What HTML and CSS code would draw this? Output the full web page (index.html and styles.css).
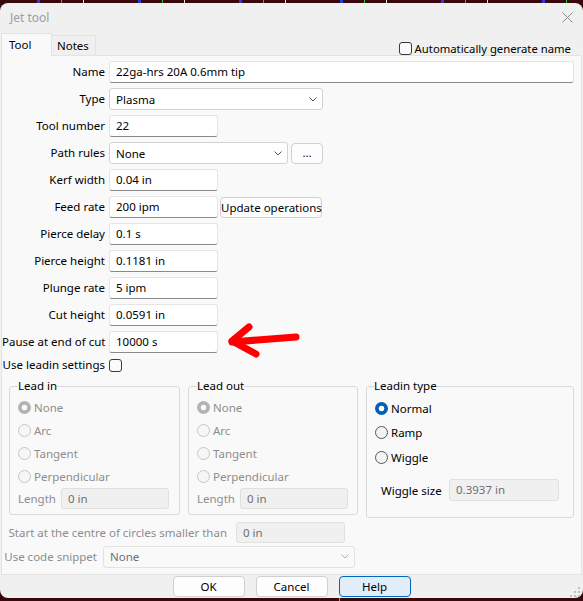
FILE: index.html
```html
<!DOCTYPE html>
<html>
<head>
<meta charset="utf-8">
<title>Jet tool</title>
<link rel="stylesheet" href="styles.css">
</head>
<body>
<div class="strip strip-top"></div>
<div class="window">
  <div class="titlebar">
    <span class="title">Jet tool</span>
    <svg class="close" width="11" height="11" viewBox="0 0 11 11"><path d="M0.5 0.5L10.5 10.5M10.5 0.5L0.5 10.5" stroke="#8e8e8e" stroke-width="1" fill="none"/></svg>
  </div>
  <div class="tabrow">
    <div class="tab active">Tool</div>
    <div class="tab">Notes</div>
    <div class="autogen"><span class="check"></span><span>Automatically generate name</span></div>
  </div>
  <div class="panel">
    <div class="form">
      <div class="lbl">Name</div>
      <div class="cell"><div class="tb w-full">22ga-hrs 20A 0.6mm tip</div></div>

      <div class="lbl">Type</div>
      <div class="cell"><div class="combo w-type"><span>Plasma</span><svg class="chev" width="8" height="5" viewBox="0 0 8 5"><path d="M0.5 0.5L4 4L7.5 0.5" stroke="#555" fill="none"/></svg></div></div>

      <div class="lbl">Tool number</div>
      <div class="cell"><div class="tb w-sm">22</div></div>

      <div class="lbl">Path rules</div>
      <div class="cell"><div class="combo w-path"><span>None</span><svg class="chev" width="8" height="5" viewBox="0 0 8 5"><path d="M0.5 0.5L4 4L7.5 0.5" stroke="#555" fill="none"/></svg></div><div class="btn btn-dots">...</div></div>

      <div class="lbl">Kerf width</div>
      <div class="cell"><div class="tb w-sm">0.04 in</div></div>

      <div class="lbl">Feed rate</div>
      <div class="cell"><div class="tb w-sm">200 ipm</div><div class="btn btn-update">Update operations</div></div>

      <div class="lbl">Pierce delay</div>
      <div class="cell"><div class="tb w-sm">0.1 s</div></div>

      <div class="lbl">Pierce height</div>
      <div class="cell"><div class="tb w-sm">0.1181 in</div></div>

      <div class="lbl">Plunge rate</div>
      <div class="cell"><div class="tb w-sm">5 ipm</div></div>

      <div class="lbl">Cut height</div>
      <div class="cell"><div class="tb w-sm">0.0591 in</div></div>

      <div class="lbl">Pause at end of cut</div>
      <div class="cell"><div class="tb w-sm">10000 s</div></div>

      <div class="lbl lbl-check">Use leadin settings</div>
      <div class="cell cell-check"><span class="check"></span></div>
    </div>

    <div class="groups">
      <fieldset class="group g-in">
        <legend>Lead in</legend>
        <div class="radio dis first"><span class="dot sel-dis"></span>None</div>
        <div class="radio dis"><span class="dot off-dis"></span>Arc</div>
        <div class="radio dis"><span class="dot off-dis"></span>Tangent</div>
        <div class="radio dis"><span class="dot off-dis"></span>Perpendicular</div>
        <div class="lenrow"><span class="lenlbl">Length</span><div class="tb dis-tb w-len">0 in</div></div>
      </fieldset>
      <fieldset class="group g-out">
        <legend>Lead out</legend>
        <div class="radio dis first"><span class="dot sel-dis"></span>None</div>
        <div class="radio dis"><span class="dot off-dis"></span>Arc</div>
        <div class="radio dis"><span class="dot off-dis"></span>Tangent</div>
        <div class="radio dis"><span class="dot off-dis"></span>Perpendicular</div>
        <div class="lenrow"><span class="lenlbl">Length</span><div class="tb dis-tb w-len">0 in</div></div>
      </fieldset>
      <fieldset class="group g-type">
        <legend>Leadin type</legend>
        <div class="radio en first"><span class="dot sel"></span>Normal</div>
        <div class="radio en"><span class="dot off"></span>Ramp</div>
        <div class="radio en third"><span class="dot off"></span>Wiggle</div>
        <div class="wigrow"><span class="wiglbl">Wiggle size</span><div class="tb dis-tb w-wig">0.3937 in</div></div>
      </fieldset>
    </div>

    <div class="startrow">
      <span class="startlbl">Start at the centre of circles smaller than</span>
      <div class="tb dis-tb w-sm">0 in</div>
    </div>
    <div class="snipperow">
      <span class="sniplbl">Use code snippet</span>
      <div class="combo dis-combo w-snip"><span>None</span><svg class="chev" width="8" height="5" viewBox="0 0 8 5"><path d="M0.5 0.5L4 4L7.5 0.5" stroke="#b0b0b0" fill="none"/></svg></div>
    </div>
  </div>

  <div class="buttons">
    <div class="btn dlg">OK</div>
    <div class="btn dlg">Cancel</div>
    <div class="btn dlg help">Help</div>
  </div>

  <svg class="arrow" width="90" height="45" viewBox="0 0 90 45">
    <path d="M12 22L44 19.5L76 17" stroke="#ff0000" stroke-width="7" stroke-linecap="round" stroke-linejoin="round" fill="none"/>
    <path d="M29 7L12 21L36 34" stroke="#ff0000" stroke-width="7" stroke-linecap="round" stroke-linejoin="round" fill="none"/>
  </svg>

  <svg class="grip" width="10" height="10" viewBox="0 0 10 10">
    <rect x="8" y="0" width="2" height="2" fill="#bdbdbd"/>
    <rect x="4" y="4" width="2" height="2" fill="#bdbdbd"/>
    <rect x="8" y="4" width="2" height="2" fill="#bdbdbd"/>
    <rect x="0" y="8" width="2" height="2" fill="#bdbdbd"/>
    <rect x="4" y="8" width="2" height="2" fill="#bdbdbd"/>
    <rect x="8" y="8" width="2" height="2" fill="#bdbdbd"/>
  </svg>
</div>
<div class="strip strip-bottom"></div>
</body>
</html>
```
FILE: styles.css
```css
html, body {
  margin: 0;
  padding: 0;
}
body {
  background: #33070b;
  font-family: "Noto Sans", "Open Sans", sans-serif;
  font-size: 11.5px;
  color: #000;
  width: 583px;
  height: 601px;
  overflow: hidden;
}
.strip {
  height: 3px;
  background:
    repeating-linear-gradient(90deg, transparent 0 37px, #2b3bd6 37px 40px, transparent 40px 61px, #2fbf4f 61px 62px, transparent 62px 83px, #e8e8e8 83px 84px, transparent 84px 101px),
    #3a070c;
}
.strip-bottom {
  height: 3px;
  background:
    repeating-linear-gradient(90deg, transparent 0 339px, #3fd07a 339px 340px, transparent 340px 583px),
    #3a070c;
}
.window {
  position: relative;
  height: 595px;
  background: #f0f0f0;
  border-radius: 8px;
  display: flex;
  flex-direction: column;
  overflow: hidden;
}
.titlebar {
  height: 30px;
  flex: none;
  display: flex;
  align-items: center;
  justify-content: space-between;
  padding: 0 10px 0 10px;
}
.title {
  color: #9d9d9d;
  font-size: 12px;
  margin-top: -1px;
}
.close {
  margin-top: -2px;
}
.tabrow {
  height: 22px;
  flex: none;
  display: flex;
  align-items: flex-start;
  padding-left: 1px;
  position: relative;
  z-index: 2;
}
.tab {
  box-sizing: border-box;
  border: 1px solid #e3e3e3;
  border-bottom: none;
  background: #f0f0f0;
  height: 20px;
  margin-top: 2px;
  line-height: 19px;
  padding: 0 0 0 5px;
  width: 45px;
  margin-left: -1px;
}
.tab.active {
  background: #f9f9f9;
  height: 23px;
  margin-top: 0;
  width: 51px;
  margin-left: 0;
  padding-left: 7px;
  line-height: 21px;
  position: relative;
  z-index: 3;
}
.autogen {
  margin-left: auto;
  margin-right: 12px;
  margin-top: 8px;
  display: flex;
  align-items: center;
  gap: 3px;
  line-height: 15px;
  font-size: 11.3px;
}
.check {
  display: inline-block;
  box-sizing: border-box;
  width: 13px;
  height: 13px;
  border: 1px solid #3c3c3c;
  border-radius: 3px;
  background: #fbfbfb;
}
.panel {
  flex: none;
  box-sizing: border-box;
  height: 520px;
  margin: 0 1px;
  background: #f9f9f9;
  border: 1px solid #e3e3e3;
  padding-top: 5px;
  position: relative;
  z-index: 1;
}
.form {
  display: grid;
  grid-template-columns: 103px 1fr;
  grid-template-rows: repeat(11, 22px) 14px;
  column-gap: 4px;
  row-gap: 5px;
}
.lbl {
  text-align: right;
  line-height: 22px;
  white-space: nowrap;
}
.lbl-check {
  line-height: 14px;
  height: 14px;
}
.cell {
  display: flex;
  align-items: flex-start;
}
.cell-check {
  align-items: center;
  height: 14px;
}
.tb {
  box-sizing: border-box;
  height: 22px;
  border: 1px solid #e5e5e5;
  border-bottom-color: #8a8a8a;
  border-radius: 3px;
  background: #fff;
  padding: 0 6px;
  line-height: 20px;
  white-space: nowrap;
  overflow: hidden;
}
.w-full { width: 465px; }
.w-sm { width: 109px; }
.w-type { width: 214px; }
.w-path { width: 179px; }
.w-len { width: 108px; height: 21px; line-height: 19px; }
.w-wig { width: 110px; }
.w-snip { width: 252px; height: 21px; }
.combo {
  box-sizing: border-box;
  height: 22px;
  border: 1px solid #d3d3d3;
  border-radius: 3px;
  background: #fff;
  padding: 0 5px 0 6px;
  display: flex;
  align-items: center;
  justify-content: space-between;
}
.btn {
  box-sizing: border-box;
  border: 1px solid #d0d0d0;
  border-radius: 4px;
  background: #fdfdfd;
  text-align: center;
  white-space: nowrap;
}
.btn-dots {
  width: 32px;
  height: 21px;
  line-height: 18px;
  margin-left: 3px;
  margin-top: 1px;
}
.btn-update {
  width: 102px;
  height: 21px;
  line-height: 19px;
  margin-left: 2px;
  margin-top: 1px;
}
.groups {
  display: flex;
  align-items: flex-start;
  gap: 8px;
  padding-left: 7px;
  margin-top: 6px;
}
.group {
  margin: 0;
  box-sizing: border-box;
  border: 1px solid #dadada;
  border-radius: 3px;
  padding: 2px 8px 0 8px;
  min-width: 0;
}
.group legend {
  padding: 0;
  line-height: 16px;
}
.g-in { width: 171px; height: 137px; }
.g-out { width: 170px; height: 137px; }
.g-type { width: 208px; height: 140px; }
.g-type legend { margin-left: -1px; }
.radio {
  display: flex;
  align-items: center;
  gap: 3px;
  height: 23px;
}
.radio.en { height: 24px; }
.radio.third { margin-top: 1px; }
.dis { color: #8d8d8d; }
.dot {
  display: inline-block;
  box-sizing: border-box;
  width: 13px;
  height: 13px;
  border-radius: 50%;
  flex: none;
}
.sel-dis {
  background: radial-gradient(circle, #fbfbfb 0 2.4px, #b3b3b3 3.2px);
}
.off-dis {
  border: 1px solid #c6c6c6;
  background: #f6f6f6;
}
.sel {
  background: radial-gradient(circle, #ffffff 0 2.4px, #005fb8 3.2px);
}
.off {
  border: 1px solid #575757;
  background: #f4f4f4;
}
.lenrow {
  display: flex;
  align-items: center;
  height: 21px;
}
.lenlbl {
  width: 43px;
  color: #8d8d8d;
}
.dis-tb {
  background: #f0f0f0;
  border: 1px solid #e0e0e0;
  color: #6f6f6f;
}
.wigrow {
  display: flex;
  align-items: center;
  margin-top: 10px;
  height: 22px;
}
.wiglbl {
  margin-left: 6px;
  width: 68px;
}
.startrow {
  display: flex;
  align-items: center;
  margin-top: 4px;
  height: 21px;
}
.startrow .tb {
  height: 21px;
  line-height: 19px;
}
.startlbl {
  width: 225px;
  margin-right: 9px;
  text-align: right;
  color: #8d8d8d;
  white-space: nowrap;
}
.snipperow {
  display: flex;
  align-items: center;
  margin-top: 3px;
  height: 21px;
}
.sniplbl {
  width: 95px;
  margin-right: 6px;
  text-align: right;
  color: #8d8d8d;
  white-space: nowrap;
}
.dis-combo {
  background: #f9f9f9;
  border-color: #e2e2e2;
  color: #6f6f6f;
}
.buttons {
  display: flex;
  justify-content: center;
  gap: 11px;
  margin-top: 1px;
  height: 21px;
}
.btn.dlg {
  width: 72px;
  height: 21px;
  line-height: 19px;
}
.btn.help {
  border-color: #0067c0;
  background: #e1eefa;
}
.arrow {
  position: absolute;
  left: 220px;
  top: 317px;
  z-index: 5;
  pointer-events: none;
}
.grip {
  position: absolute;
  right: 3px;
  bottom: 1px;
}
```
